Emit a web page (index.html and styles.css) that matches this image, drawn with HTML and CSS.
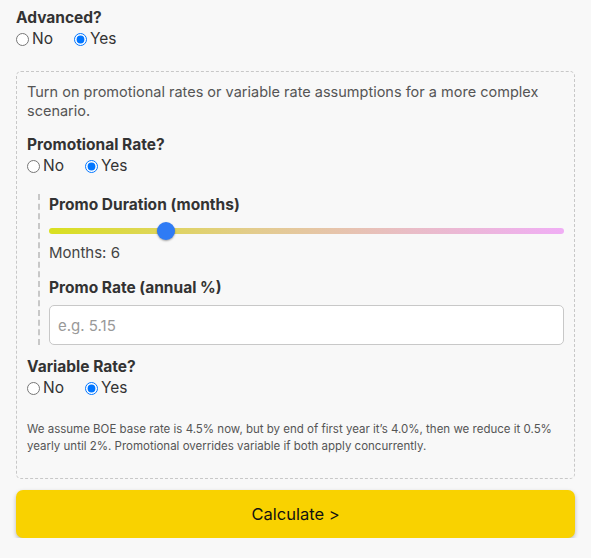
FILE: index.html
```html
<!DOCTYPE html>
<html>
<head>
<meta charset="utf-8">
<link rel="stylesheet" href="styles.css">
</head>
<body>
<div class="page">
  <div class="field">
    <div class="label">Advanced?</div>
    <div class="radios">
      <label class="opt"><input type="radio" name="adv"> No</label>
      <label class="opt"><input type="radio" name="adv" checked> Yes</label>
    </div>
  </div>

  <div class="box">
    <p class="intro">Turn on promotional rates or variable rate assumptions for a more complex scenario.</p>

    <div class="field">
      <div class="label">Promotional Rate?</div>
      <div class="radios">
        <label class="opt"><input type="radio" name="promo"> No</label>
        <label class="opt"><input type="radio" name="promo" checked> Yes</label>
      </div>
    </div>

    <div class="nested">
      <div class="label">Promo Duration (months)</div>
      <input class="slider" type="range" min="1" max="24" value="6">
      <div class="months">Months: 6</div>
      <div class="label label-rate">Promo Rate (annual %)</div>
      <input class="text-input" type="text" placeholder="e.g. 5.15">
    </div>

    <div class="field">
      <div class="label">Variable Rate?</div>
      <div class="radios">
        <label class="opt"><input type="radio" name="var"> No</label>
        <label class="opt"><input type="radio" name="var" checked> Yes</label>
      </div>
    </div>

    <p class="note">We assume BOE base rate is 4.5% now, but by end of first year it’s 4.0%, then we reduce it 0.5% yearly until 2%. Promotional overrides variable if both apply concurrently.</p>
  </div>

  <button class="calc">Calculate &gt;</button>
</div>
</body>
</html>
```
FILE: styles.css
```css
html, body {
  margin: 0;
  background: #f8f8f8;
}
body {
  font-family: Inter, "Noto Sans", sans-serif;
  color: #333;
}
.page {
  padding: 8px 16px 0 16px;
  display: flex;
  flex-direction: column;
}
.label {
  font-weight: 700;
  font-size: 15.5px;
  line-height: 20px;
  color: #333;
}
.radios {
  display: flex;
  gap: 21px;
  font-size: 15.5px;
  line-height: 22px;
  color: #333;
}
.opt {
  display: flex;
  align-items: center;
  gap: 3px;
}
.opt input {
  margin: 0;
  width: 13px;
  height: 13px;
}
.box {
  margin-top: 21px;
  border: 1px dashed #c8c8c8;
  border-radius: 5px;
  padding: 10px 10px 23px 10px;
  display: flex;
  flex-direction: column;
}
.intro {
  margin: 0 0 15px 0;
  font-size: 14.5px;
  line-height: 19px;
  color: #555;
}
.nested {
  margin: 17px 0 12px 11px;
  border-left: 2px dashed #c8c8c8;
  padding: 1px 0 0 9px;
  display: flex;
  flex-direction: column;
}
.slider {
  -webkit-appearance: none;
  appearance: none;
  width: 100%;
  height: 6px;
  margin: 13px 0 9px 0;
  border-radius: 3px;
  background: linear-gradient(to right, #d9e01f, #e3cc8e 40%, #e9bdc6 70%, #f0aef5);
  outline: none;
}
.slider::-webkit-slider-thumb {
  -webkit-appearance: none;
  appearance: none;
  width: 18px;
  height: 18px;
  border-radius: 50%;
  background: #2f7bf5;
  box-shadow: 0 1px 2px rgba(0,0,0,0.35);
  cursor: pointer;
}
.months {
  font-size: 15px;
  line-height: 20px;
  color: #444;
}
.label-rate {
  margin-top: 15px;
}
.text-input {
  margin-top: 7px;
  height: 40px;
  box-sizing: border-box;
  border: 1px solid #c8c8c8;
  border-radius: 5px;
  background: #fff;
  padding: 0 8px;
  font-family: inherit;
  font-size: 15px;
  color: #333;
}
.text-input::placeholder {
  color: #999;
}
.note {
  margin: 22px 0 0 0;
  font-size: 11.5px;
  line-height: 17px;
  color: #555;
}
.calc {
  margin-top: 11px;
  height: 48px;
  border: none;
  border-radius: 7px;
  background: #f9d200;
  box-shadow: 0 2px 4px rgba(0,0,0,0.25);
  font-family: inherit;
  font-size: 16.5px;
  color: #111;
  cursor: pointer;
}
```
